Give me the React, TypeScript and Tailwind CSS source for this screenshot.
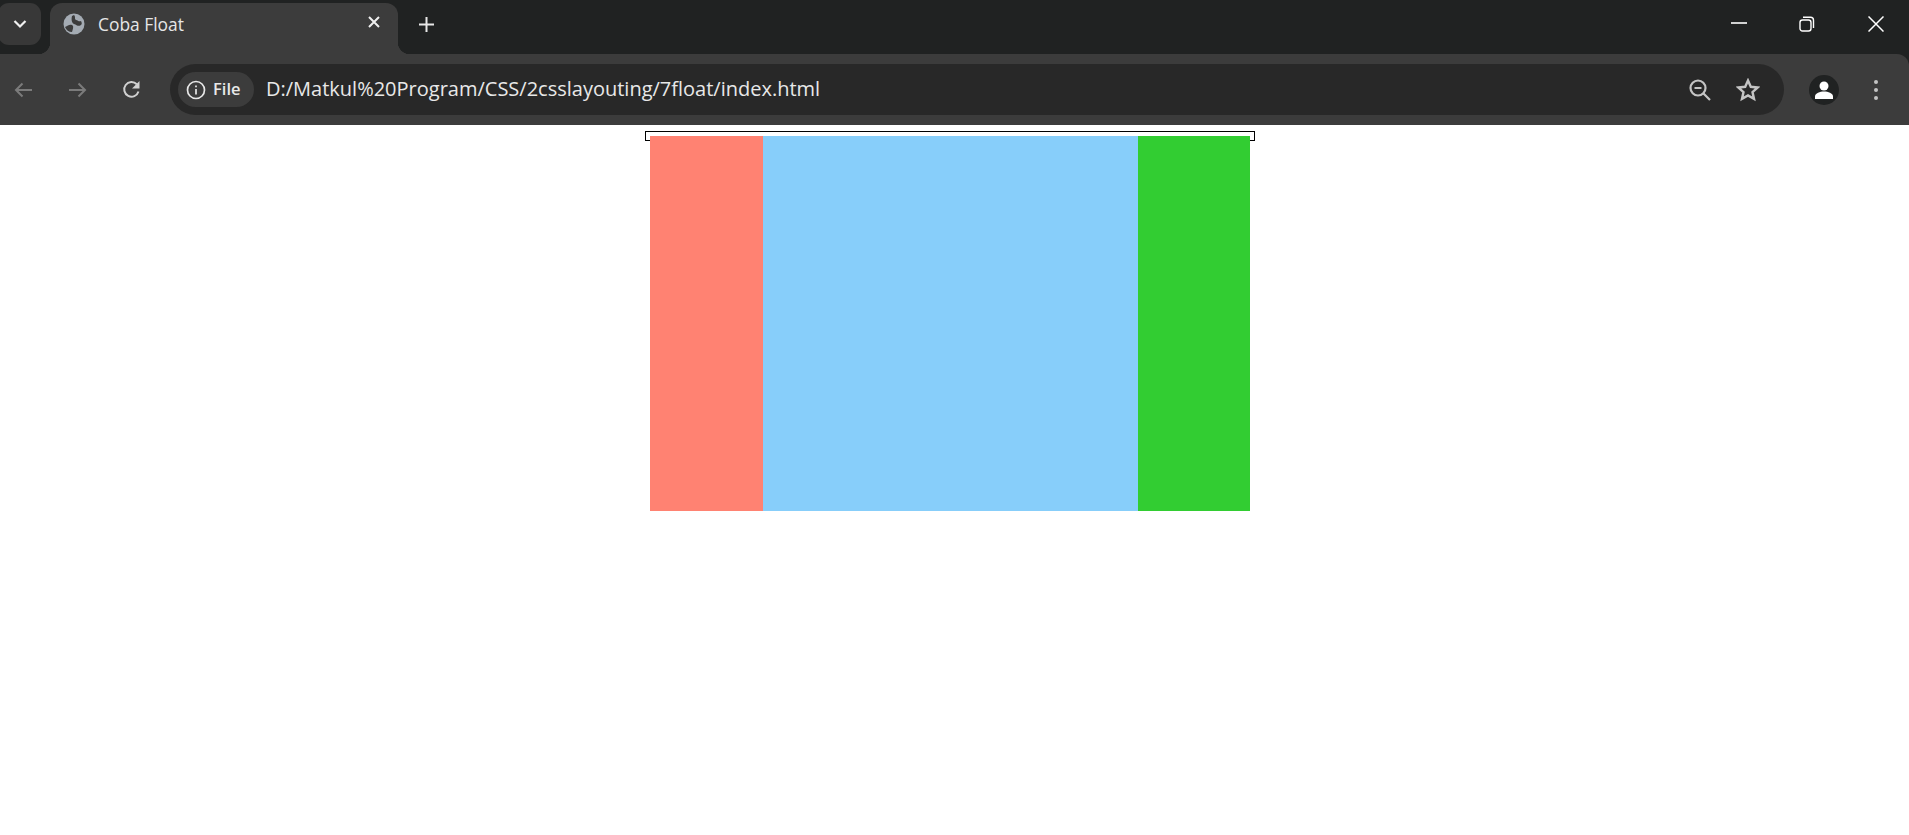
export default function App() {
  return (
    <div className="h-[835px] overflow-hidden bg-white font-['Open_Sans','Noto_Sans',sans-serif]">
      <div className="bg-[#202222]">
        <header className="flex h-[54px] items-start">
          <div className="ml-[-2px] mt-[3px] flex h-[42px] w-[43px] items-center justify-center rounded-[11px] bg-[#383838]">
            <svg width="14" height="10" viewBox="0 0 14 10" fill="none" stroke="#f0f0f0" strokeWidth="2.2"><path d="M1.5 2 7 7.5 12.5 2" /></svg>
          </div>
          <div className="relative ml-[9px] mt-[3px] flex h-[51px] w-[348px] items-start rounded-t-[12px] bg-[#3c3c3c] pl-[13px] pt-[10px]">
            <div className="absolute bottom-0 left-[-12px] h-[12px] w-[12px] bg-[radial-gradient(circle_at_0_0,#202222_12px,#3c3c3c_12.5px)]" />
            <div className="absolute bottom-0 right-[-12px] h-[12px] w-[12px] bg-[radial-gradient(circle_at_100%_0,#202222_12px,#3c3c3c_12.5px)]" />
            <svg width="22" height="22" viewBox="0 0 22 22"><circle cx="11" cy="11" r="10.5" fill="#a4abb3" /><path d="M2 14c3-1 4-3 7-2 2 1 1 4 0 7-3 0-6-2-7-5ZM11 2c2 2 0 4 2 5 2 .5 3 2 5 1 1 2 1 3 0 4-3 2-4 0-7-1-2-1-3-4-2-8Z" fill="#3c3c3c" /></svg>
            <span className="ml-[13px] text-[17.4px] leading-[22px] text-[#e6e6e6]">Coba Float</span>
            <svg className="ml-[183px] mt-[2px]" width="14" height="14" viewBox="0 0 14 14" stroke="#f0f0f0" strokeWidth="2" fill="none"><path d="m2 2 10 10M12 2 2 12" /></svg>
          </div>
          <svg className="ml-[20px] mt-[16px]" width="17" height="17" viewBox="0 0 17 17" stroke="#e8e8e8" strokeWidth="2" fill="none"><path d="M8.5 1v15M1 8.500h15" /></svg>
          <div className="ml-auto mt-[16px] flex items-start">
            <svg width="16" height="16" viewBox="0 0 16 16" stroke="#fff" strokeWidth="1.6" fill="none"><path d="M0 7h16" /></svg>
            <svg className="ml-[52px]" width="16" height="16" viewBox="0 0 16 16" stroke="#fff" strokeWidth="1.4" fill="none"><rect x="1" y="4" width="11" height="11" rx="2.500" /><path d="M4 1.200h7.500a3 3 0 0 1 3 3V12" /></svg>
            <svg className="ml-[53px] mr-[25px]" width="16" height="16" viewBox="0 0 16 16" stroke="#fff" strokeWidth="1.500" fill="none"><path d="M.5.500l15 15M15.500.500l-15 15" /></svg>
          </div>
        </header>
        <nav className="flex h-[71px] items-center rounded-tr-[12px] bg-[#3c3c3c]">
          <svg className="ml-[14px]" width="19" height="16" viewBox="0 0 19 16" stroke="#7b7b7b" strokeWidth="2" fill="none"><path d="M18 8H2M8.500 1.500 2 8l6.500 6.500" /></svg>
          <svg className="ml-[35px]" width="19" height="16" viewBox="0 0 19 16" stroke="#7b7b7b" strokeWidth="2" fill="none"><path d="M1 8h16M10.500 1.500 17 8l-6.500 6.500" /></svg>
          <svg className="ml-[35px]" width="20" height="20" viewBox="0 0 20 20" stroke="#d0d0d0" strokeWidth="2" fill="none"><path d="M16.500 11.500A7.300 7.300 0 1 1 14.800 4.300" /><path d="M17.500 1v7.500H10" fill="#d0d0d0" stroke="none" /></svg>
          <div className="ml-[28px] flex h-[51px] w-[1614px] items-center rounded-[26px] bg-[#282828] pl-[8px]">
            <div className="flex h-[35px] w-[76px] items-center rounded-[18px] bg-[#3c3c3c] pl-[8px]">
              <svg width="20" height="20" viewBox="0 0 20 20" fill="none" stroke="#e8e8e8" strokeWidth="1.700"><circle cx="10" cy="10" r="8.500" /><path d="M10 9v5.500M10 5.500v1.800" /></svg>
              <span className="ml-[7px] text-[16.5px] font-semibold text-[#e8e8e8]">File</span>
            </div>
            <span className="mb-[2px] ml-[12px] text-[20px] leading-[24px] text-[#e8e8e8]">D:/Matkul%20Program/CSS/2csslayouting/7float/index.html</span>
            <svg className="ml-auto" width="22" height="22" viewBox="0 0 22 22" fill="none" stroke="#c4c4c4" strokeWidth="2.2"><circle cx="9" cy="9" r="7.500" /><path d="M5.500 9h7M14.500 14.500l6.500 6.500" /></svg>
            <svg className="ml-[25px] mr-[24px]" width="24" height="24" viewBox="0 0 24 24" fill="none" stroke="#c4c4c4" strokeWidth="2.4"><path d="m12 2.500 2.800 6.300 6.900.7-5.200 4.600 1.500 6.800L12 17.400l-6 3.500 1.500-6.800-5.200-4.600 6.900-.7Z" /></svg>
          </div>
          <div className="ml-[25px] flex h-[30px] w-[30px] items-center justify-center rounded-full bg-[#202222]">
            <svg width="20" height="20" viewBox="0 0 20 20" fill="#fff"><circle cx="10" cy="6" r="4.500" /><path d="M1 19v-2.500C1 13 6 11.500 10 11.500s9 1.500 9 5V19Z" /></svg>
          </div>
          <div className="ml-[35px] flex flex-col gap-[4px]">
            <div className="h-[4px] w-[4px] rounded-full bg-[#c4c4c4]" />
            <div className="h-[4px] w-[4px] rounded-full bg-[#c4c4c4]" />
            <div className="h-[4px] w-[4px] rounded-full bg-[#c4c4c4]" />
          </div>
        </nav>
      </div>
      <main className="ml-[645px] mt-[6px] h-[10px] w-[610px] border border-black p-[4px]">
        <div className="float-left h-[375px] w-[113px] bg-[#ff8272]" />
        <div className="float-right h-[375px] w-[112px] bg-[#32cd32]" />
        <div className="mx-[113px] h-[375px] w-[375px] bg-[#87cefa]" />
      </main>
    </div>
  );
}
